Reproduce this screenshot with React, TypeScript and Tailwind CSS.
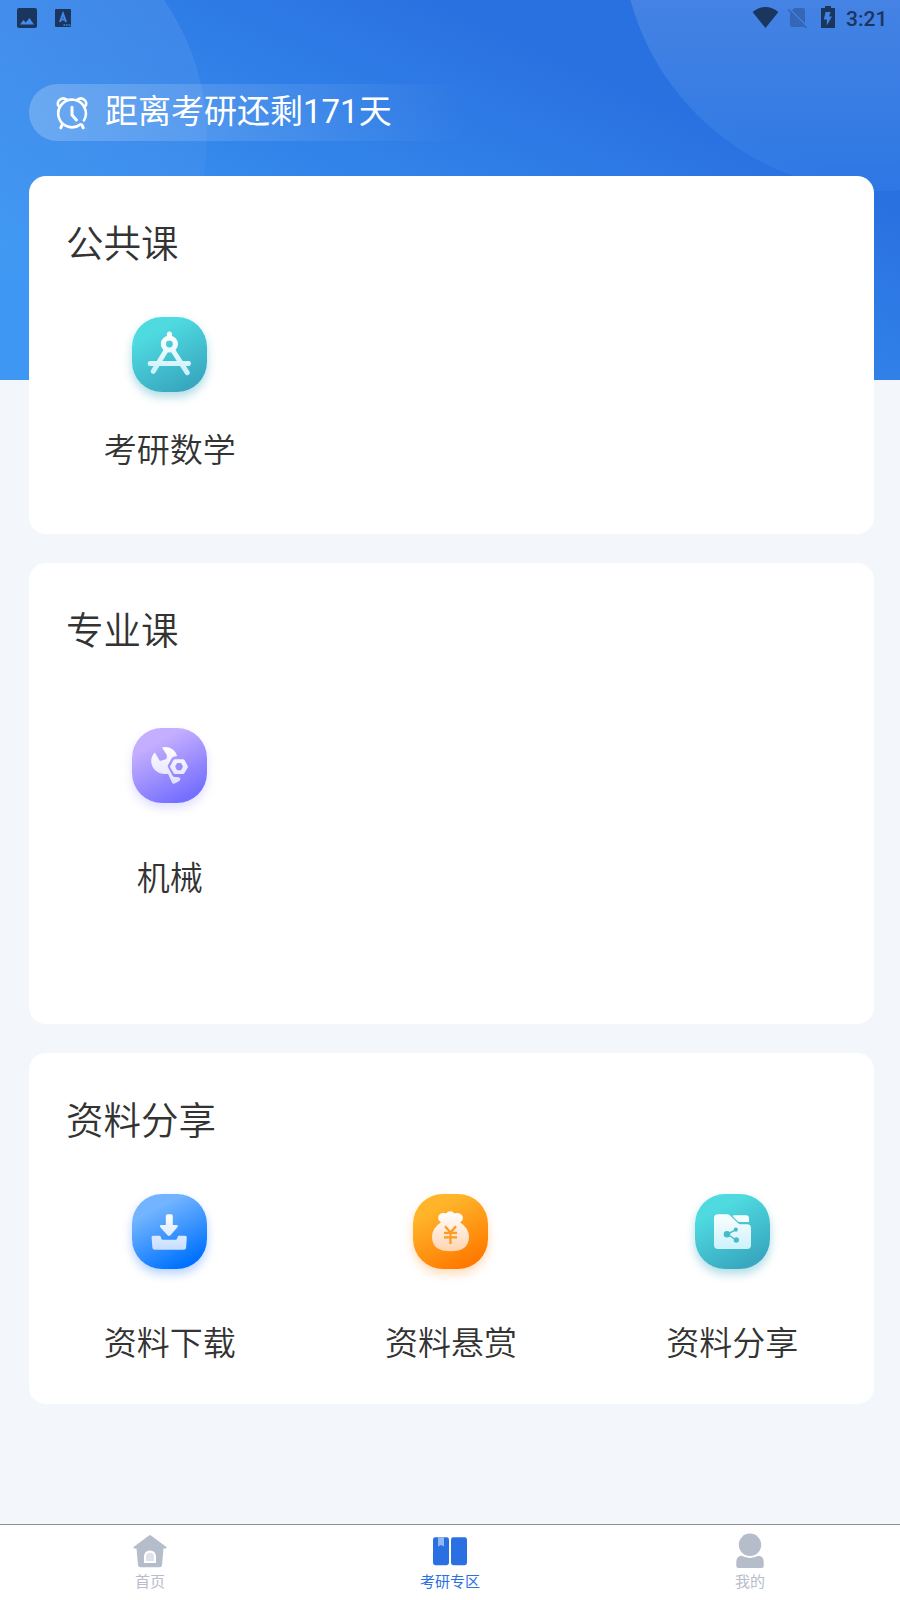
import React from "react";

type TileProps = {
  id: string;
  from: string;
  to: string;
  tint: string;
  shadow: string;
  children: React.ReactNode;
};

// rounded gradient tile, glyph inside is filled with url(#<id>-fg)
const Tile = ({ id, from, to, tint, shadow, children }: TileProps) => (
  <svg viewBox="0 0 75 75" className={`w-[75px] h-[75px] rounded-[30px] overflow-visible ${shadow}`}>
    <defs>
      <linearGradient id={`${id}-bg`} x1="0.3" y1="0.12" x2="0.72" y2="0.93">
        <stop offset="0.08" stopColor={from} />
        <stop offset="1" stopColor={to} />
      </linearGradient>
      <linearGradient id={`${id}-fg`} gradientUnits="userSpaceOnUse" x1="37" y1="18" x2="37" y2="57">
        <stop offset="0" stopColor="#fff" />
        <stop offset="1" stopColor={tint} />
      </linearGradient>
    </defs>
    <rect width="75" height="75" rx="30" fill={`url(#${id}-bg)`} />
    {children}
  </svg>
);

const MathIcon = () => (
  <Tile id="math" from="#4fdae0" to="#38a8c0" tint="#c9f1fa" shadow="shadow-[0_5px_10px_rgba(56,168,192,0.4)]">
    <g stroke="url(#math-fg)" strokeWidth="5" strokeLinecap="round" fill="none">
      <circle cx="37.4" cy="27" r="6" strokeWidth="5.2" />
      <path d="M37.4 17v4l.1 0M34 33.5L21.3 54.3M41 33.5L55.2 55.6M18.2 46.4h38.2l.1.1" />
    </g>
  </Tile>
);

const MachineIcon = () => (
  <Tile id="machine" from="#c4aeff" to="#756fff" tint="#e0deff" shadow="shadow-[0_5px_10px_rgba(117,111,255,0.22)]">
    <path
      fill="url(#machine-fg)"
      d="M22.8 24.6L27.4 32.2Q28 33 29 32.7L33.7 31.2Q34.8 30.8 34.8 29.6L34.9 28Q34.9 27.3 34.5 26.6L30 19.4Q36 18 40.8 21.4Q44.4 24 45.2 27.9L41.5 28.8Q40.3 29.2 39.5 30.5L36.2 36.6Q35.5 38 36 39.3L40.6 47.7Q41.3 49 42.8 49L47 49.2Q48.6 50 48.2 51.6Q47.8 53 46.5 53.6L42.6 55.5Q40.8 56.2 40 54.5L36 45.8Q28.4 46.8 23.4 42.4Q19.2 38.5 19.2 33Q19.4 28 22.8 24.6Z"
    />
    <path
      fill="url(#machine-fg)"
      fillRule="evenodd"
      d="M43 31.2h8q1 0 1.5.9l3.1 5.6q.5 1 0 2l-3.1 5.4q-.5.9-1.5.9h-8q-1 0-1.5-.9l-3.1-5.4q-.5-1 0-2l3.1-5.6q.5-.9 1.5-.9ZM45.1 34.9l-2 3.7 2 3.6h3.9l2-3.6-2-3.7Z"
    />
  </Tile>
);

const DownloadIcon = () => (
  <Tile id="download" from="#72b4ff" to="#0072ff" tint="#c5dcff" shadow="shadow-[0_5px_10px_rgba(20,110,255,0.3)]">
    <path
      fill="url(#download-fg)"
      d="M35.6 20.2h3.4q1.8 0 1.8 1.8v9h3.8q2.1.3.8 2.2l-6.9 8q-1.5 1.4-3 0l-7.2-8q-1.2-2 .8-2.2H33.8v-9q0-1.8 1.8-1.8Z"
    />
    <path
      fill="url(#download-fg)"
      d="M21.3 41.8h6q1.1 0 1.4 1l.7 2q.3.9 1.3.9h13q1 0 1.3-.9l.7-2q.3-1 1.4-1h6q1.8 0 1.7 1.8l-.7 10.2q-.2 2-2.2 2H22.6q-2 0-2.2-2l-.8-10.2q-.1-1.8 1.7-1.8Z"
    />
  </Tile>
);

const RewardIcon = () => (
  <Tile id="reward" from="#ffb42a" to="#ff7a00" tint="#ffd4b0" shadow="shadow-[0_5px_10px_rgba(255,130,10,0.28)]">
    <path
      fill="url(#reward-fg)"
      d="M28 28.2Q24.8 26.5 25.2 23Q26.2 19 30.6 19Q32.4 19 33.3 19.5Q34.5 17.4 37.3 17.3Q40 17.4 41.4 19.5Q43 18.6 45.8 19.2Q50 20.6 50 24Q49.8 27 47 28.2Q56 34.2 56 43Q55.8 57.3 37.5 57.3Q19.2 57.3 19 43Q19 34.2 28 28.2Z"
    />
    <path
      d="M32 32.3L37.5 38.5L43 32.3M31 38.8H44M31 43.4H44M37.5 38.5V50"
      stroke="#ff9a1f"
      strokeWidth="2.2"
      fill="none"
    />
  </Tile>
);

const ShareIcon = () => (
  <Tile id="share" from="#4fdae0" to="#38a8c0" tint="#c9f1fa" shadow="shadow-[0_5px_10px_rgba(56,168,192,0.4)]">
    <path
      fill="url(#share-fg)"
      d="M23 20.2h9q1.6 0 2.8 1.1l8 7.8q1.2 1.2 2.8 1.2H52q4 0 4 4V51q0 4-4 4H23q-4 0-4-4V24.2q0-4 4-4Z"
    />
    <path fill="url(#share-fg)" d="M38.6 21.3H51q3 0 3 3V28H44.8q-1.4 0-2.4-1L38 22.5q-.6-.9.6-1.2Z" />
    <path d="M41 35.7L32 40.3L41.5 46" stroke="#44bccb" strokeWidth="1.4" fill="none" />
    <circle cx="32" cy="40.3" r="3.3" fill="#44bccb" />
    <circle cx="40.8" cy="35.7" r="2.1" fill="#44bccb" />
    <circle cx="41.3" cy="46" r="2.7" fill="#44bccb" />
  </Tile>
);

const StatusBar = () => (
  <div className="flex h-9 items-center text-[#1a355e]">
    <svg viewBox="0 0 72 36" className="h-9 w-[72px]">
      <path
        fill="currentColor"
        fillRule="evenodd"
        d="M19 8h16q2 0 2 2v16q0 2-2 2H19q-2 0-2-2V10q0-2 2-2ZM20 24.5h14L29.5 18l-3.7 4.6-2.3-2.6Z"
      />
      <rect x="55" y="9" width="16" height="18" rx="1" fill="currentColor" />
      <path d="M60 22L63 13.6L66 22M61 19.6H65" stroke="#418ae9" strokeWidth="2" fill="none" />
      <path d="M63.5 25H70.5" stroke="#418ae9" strokeWidth="1.6" strokeDasharray="1.6 1" />
    </svg>
    <svg viewBox="0 0 90 36" className="ml-auto h-9 w-[90px]">
      <path fill="currentColor" d="M2.6 12Q15.5 2 28.4 12L15.5 28Z" />
      <path
        fill="currentColor"
        opacity="0.34"
        d="M44.5 8H53q2 0 2 2v13.6L42 10.4ZM40 12.5L54 27H42q-2 0-2-2Z"
      />
      <path d="M38.3 9.5L56.5 28" stroke="currentColor" strokeWidth="1.5" opacity="0.4" />
      <path
        fill="currentColor"
        fillRule="evenodd"
        d="M75 6h6v2h4v20H71V8h4ZM75.6 12L73.8 19.6H76.8V25.6L82 16.6H79L80.6 12Z"
      />
    </svg>
    <span className="ml-[6px] mr-[13px] w-[41px] whitespace-nowrap pt-[1px] text-[21px] font-medium leading-9">3:21</span>
  </div>
);

const Countdown = () => (
  <div className="mt-12 ml-[29px] flex h-[57px] w-[442px] items-center rounded-full bg-gradient-to-r from-white/22 to-white/0 pl-[26px] text-white">
    <svg viewBox="0 0 34 36" className="h-9 w-[34px]" fill="none" stroke="currentColor" strokeWidth="2.6" strokeLinecap="round">
      <path d="M29 25.4A13.8 13.8 0 1 0 25.5 29.4" />
      <path d="M3.6 11Q1.8 8.6 3.8 5.6Q7.5 1.6 12 4.9M22 4.9Q26.5 1.6 30.2 5.6Q32.2 8.6 30.4 11" />
      <path d="M17 12.3V20L21.4 25" strokeWidth="3" />
      <path d="M7 30L5.8 32.8M27 30L28.2 32.8" strokeWidth="3" />
    </svg>
    <span className="ml-4 text-[33px] leading-[57px] relative -top-[1px]">距离考研还剩171天</span>
  </div>
);

type Item = { label: string; icon: React.ReactNode };
type Section = { title: string; items: Item[]; card: string; grid: string; gap: string };

const sections: Section[] = [
  {
    title: "公共课",
    card: "h-[358px]",
    grid: "mt-[46px]",
    gap: "mt-[34px]",
    items: [{ label: "考研数学", icon: <MathIcon /> }],
  },
  {
    title: "专业课",
    card: "h-[461px]",
    grid: "mt-[70px]",
    gap: "mt-[51px]",
    items: [{ label: "机械", icon: <MachineIcon /> }],
  },
  {
    title: "资料分享",
    card: "h-[351px]",
    grid: "mt-[46px]",
    gap: "mt-[50px]",
    items: [
      { label: "资料下载", icon: <DownloadIcon /> },
      { label: "资料悬赏", icon: <RewardIcon /> },
      { label: "资料分享", icon: <ShareIcon /> },
    ],
  },
];

const SectionCard = ({ title, items, card, grid, gap }: Section) => (
  <section className={`w-[845px] rounded-[17px] bg-white pt-[41px] text-[#333] font-[350] ${card}`}>
    <h2 className="pl-[37px] text-[37.5px] leading-[54px] font-[350]">{title}</h2>
    <div className={`grid w-[844px] grid-cols-3 ${grid}`}>
      {items.map((item) => (
        <div key={item.label} className="flex flex-col items-center">
          {item.icon}
          <span className={`text-[33px] leading-[50px] ${gap}`}>{item.label}</span>
        </div>
      ))}
    </div>
  </section>
);

const HomeIcon = () => (
  <svg viewBox="0 0 36 36" className="h-9 w-9">
    <path
      fill="#b6bdca"
      d="M17 2.6Q18 1.6 19 2.6L34.4 14Q35.2 15.3 33.8 15.5H31.5L30 32Q29.8 34.2 27.6 34.2H8.4Q6.2 34.2 6 32L4.5 15.5H2.2Q.8 15.3 1.6 14Z"
    />
    <path fill="#dfe2ea" stroke="#fff" strokeWidth="2" d="M13 29V23.5Q13.3 18.6 18 18.5Q22.7 18.6 23 23.5V29Z" />
  </svg>
);

const BookIcon = () => (
  <svg viewBox="0 0 36 36" className="h-9 w-9">
    <rect x="1" y="4.2" width="16" height="28" rx="2.4" fill="#2a70e2" />
    <rect x="19" y="4.2" width="16" height="28" rx="2.4" fill="#2a70e2" />
    <path d="M6 4.2H12V13.6L9 12L6 13.6Z" fill="#93b7f2" />
  </svg>
);

const UserIcon = () => (
  <svg viewBox="0 0 36 36" className="h-9 w-9" fill="#b6bdca">
    <circle cx="18" cy="11.8" r="11.2" />
    <path d="M4.3 31V28.5Q4.5 23.5 9.5 22.8Q18 27 26.5 22.8Q31.5 23.5 31.7 28.5V33Q31.7 35 29.7 35H6.3Q4.3 35 4.3 33Z" />
  </svg>
);

const tabs = [
  { label: "首页", icon: <HomeIcon />, color: "text-[#b8bccb]" },
  { label: "考研专区", icon: <BookIcon />, color: "text-[#2a70e2]" },
  { label: "我的", icon: <UserIcon />, color: "text-[#b8bccb]" },
];

const App = () => {
  return (
    <div className="relative flex h-[1600px] w-[900px] flex-col overflow-hidden bg-[#f3f7fc] font-['Roboto','Noto_Sans_CJK_SC',sans-serif]">
      {/* header backdrop */}
      <div className="absolute inset-x-0 top-0 h-[380px] overflow-hidden bg-[linear-gradient(204.5deg,#2970e0_25%,#3080e8_48%,#3e97f3_83%)]">
        <svg viewBox="0 0 900 380" className="h-[380px] w-[900px]">
          <defs>
            <linearGradient id="glow" x1="0" y1="0" x2="0" y2="300" gradientUnits="userSpaceOnUse">
              <stop offset="0" stopColor="#fff" stopOpacity="0.085" />
              <stop offset="1" stopColor="#fff" stopOpacity="0" />
            </linearGradient>
            <linearGradient id="glow2" x1="0" y1="0" x2="0" y2="192" gradientUnits="userSpaceOnUse">
              <stop offset="0" stopColor="#fff" stopOpacity="0.13" />
              <stop offset="1" stopColor="#4fb0ff" stopOpacity="0.12" />
            </linearGradient>
          </defs>
          <circle cx="-36" cy="138" r="243" fill="url(#glow)" />
          <circle cx="881" cy="-69" r="260" fill="url(#glow2)" />
        </svg>
      </div>

      <div className="relative flex flex-1 flex-col">
        <StatusBar />
        <Countdown />
        <main className="mt-[35px] ml-[29px] flex flex-col gap-[29px]">
          {sections.map((s) => (
            <SectionCard key={s.title} {...s} />
          ))}
        </main>
        <nav className="mt-auto grid h-[76px] grid-cols-3 border-t border-[#8d9199] bg-white">
          {tabs.map((tab) => (
            <div key={tab.label} className={`flex flex-col items-center pt-2 ${tab.color}`}>
              {tab.icon}
              <span className="mt-px text-[15px] leading-6">{tab.label}</span>
            </div>
          ))}
        </nav>
      </div>
    </div>
  );
};

export default App;
